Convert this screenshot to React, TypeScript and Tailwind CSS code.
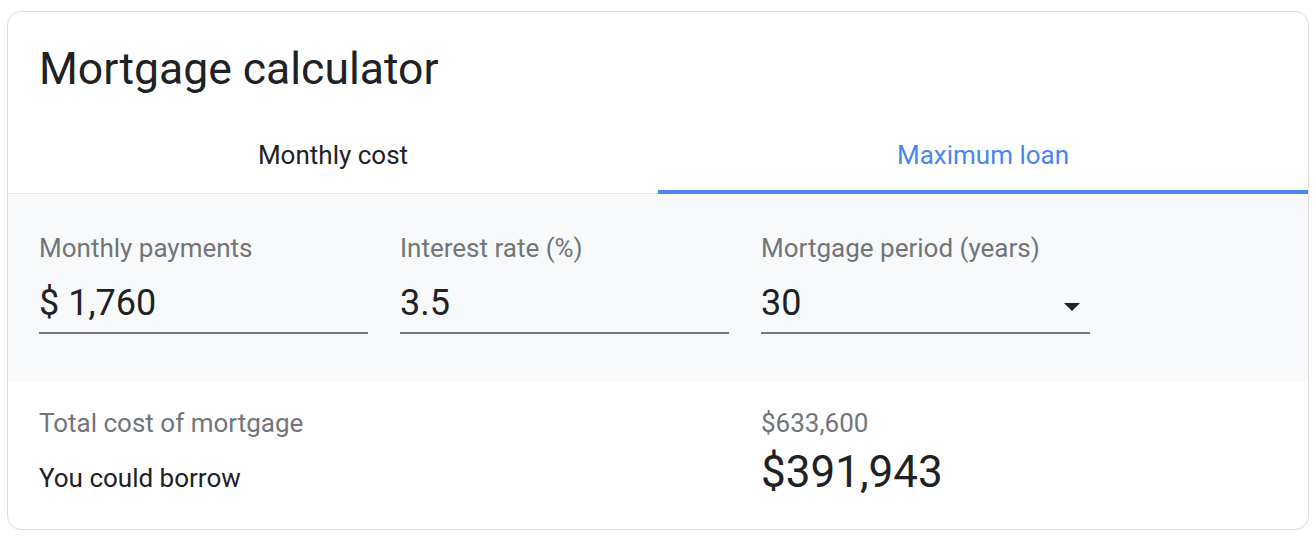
import React from "react";

type Field = {
  label: string;
  value: string;
  select?: boolean;
};

const fields: Field[] = [
  { label: "Monthly payments", value: "$ 1,760" },
  { label: "Interest rate (%)", value: "3.5" },
  { label: "Mortgage period (years)", value: "30", select: true },
];

function DropArrow() {
  return (
    <svg width="16" height="8" viewBox="0 0 16 8" className="mt-[22px] shrink-0">
      <path d="M0 0h16L8 8z" fill="#202124" />
    </svg>
  );
}

export default function App() {
  return (
    <div className="pt-[11px] pl-[7px] font-['Roboto',sans-serif] bg-white min-h-[538px]">
      <div className="w-[1302px] rounded-[14px] border border-[#dadce0] bg-white overflow-hidden">
        <h1 className="pl-[31px] pt-[31px] text-[44.5px] leading-[52px] text-[#202124] font-normal">
          Mortgage calculator
        </h1>

        {/* tabs */}
        <div className="flex border-b border-[#e8eaed]">
          <button className="relative flex-1 pt-[45px] pb-[23px] text-[26px] leading-[30px] text-[#202124]">
            Monthly cost
          </button>
          <button className="relative flex-1 pt-[45px] pb-[23px] text-[26px] leading-[30px] text-[#4a86ef]">
            Maximum loan
            <span className="absolute left-0 right-0 bottom-[-1px] h-[4px] bg-[#4a86ef]" />
          </button>
        </div>

        {/* inputs */}
        <div className="bg-[#f8f9fa] pl-[31px] pt-[38px] pb-[47px] flex gap-[32px]">
          {fields.map((f) => (
            <div key={f.label} className="w-[329px]">
              <div className="text-[26px] leading-[32px] text-[#70757a]">{f.label}</div>
              <div className="mt-[17px] flex items-start justify-between pr-[10px] pb-[7px] border-b-2 border-[#75777c]">
                <span className="text-[36px] leading-[44px] text-[#202124]">{f.value}</span>
                {f.select && <DropArrow />}
              </div>
            </div>
          ))}
        </div>

        {/* results */}
        <div className="pl-[31px] pt-[26px] pb-[31px] grid grid-cols-[722px_1fr] gap-y-[7px] items-baseline">
          <div className="text-[26px] leading-[32px] text-[#70757a]">Total cost of mortgage</div>
          <div className="text-[26px] leading-[32px] text-[#70757a]">$633,600</div>
          <div className="text-[26px] leading-[32px] text-[#202124]">You could borrow</div>
          <div className="text-[44px] leading-[52px] text-[#202124]">$391,943</div>
        </div>
      </div>
    </div>
  );
}
